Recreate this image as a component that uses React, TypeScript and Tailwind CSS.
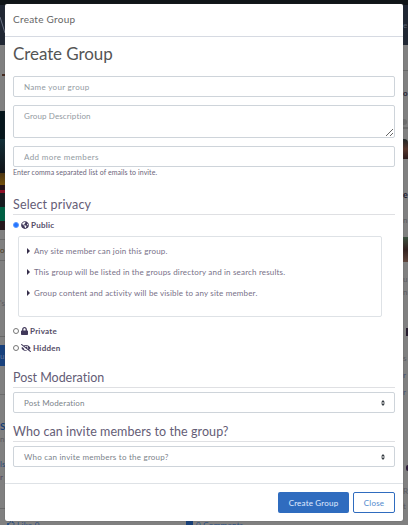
import { ReactNode } from "react";
import { FaEyeSlash, FaGlobeAmericas, FaLock, FaRegThumbsUp } from "react-icons/fa";

const fieldClass =
  "block w-full shrink-0 rounded-[2px] border border-[#ced4da] bg-white px-[10px] text-[8px] text-[#7b838a] placeholder-[#929a9f] outline-none";

const publicRules = [
  "Any site member can join this group.",
  "This group will be listed in the groups directory and in search results.",
  "Group content and activity will be visible to any site member.",
];

interface SectionProps {
  title: string;
  className?: string;
  children: ReactNode;
}

function Section({ title, className = "tracking-[0.05px]", children }: SectionProps) {
  return (
    <section className="flex shrink-0 flex-col gap-[4px]">
      <h2
        className={`h-[21px] border-b border-[#dfe0e3] pt-px text-[12.5px] leading-[20px] whitespace-nowrap text-[#645d76] ${className}`}
      >
        {title}
      </h2>
      {children}
    </section>
  );
}

interface PrivacyOptionProps {
  icon: ReactNode;
  label: string;
  checked?: boolean;
}

function PrivacyOption({ icon, label, checked }: PrivacyOptionProps) {
  return (
    <label className="flex h-[10px] items-center gap-[2px] text-[8px] leading-[10px] font-bold tracking-[0.25px] text-[#544d68]">
      <input
        type="radio"
        name="privacy"
        defaultChecked={checked}
        className="size-[6px] appearance-none rounded-full border border-[#767676] bg-white checked:border-[#5b9aff] checked:bg-[#2374ff]"
      />
      <span className="text-[#40385a]">{icon}</span>
      {label}
    </label>
  );
}

function SelectField({ label, className }: { label: string; className: string }) {
  return (
    <button
      type="button"
      className={`${fieldClass} flex! h-[21px] items-center justify-between text-left ${className}`}
    >
      {label}
      <svg width="4" height="6" viewBox="0 0 4 6" className="mr-[-1px] fill-[#343a40]">
        <path d="M2 0 0 2.4h4zm0 6L0 3.6h4z" />
      </svg>
    </button>
  );
}

// Page left showing around the dialog: a sliver on each side and one below
function Backdrop() {
  return (
    <div className="absolute inset-0 flex flex-col overflow-hidden bg-[#808080] text-[8px] leading-[10px] whitespace-nowrap text-[#5b5b60]">
      <div className="h-[5px] shrink-0 bg-[#101518]" />
      <div className="flex h-[40px] shrink-0 items-center justify-between bg-[#202733] text-[#596171]">
        <svg width="5" height="18" viewBox="0 0 5 18" className="fill-none stroke-[#687080]">
          <path d="M0 1l5 16" />
        </svg>
        <span className="w-[5px] pb-[1px]">e</span>
      </div>

      <div className="flex h-[475px] shrink-0 justify-between">
        <div className="flex w-[5px] flex-col overflow-hidden">
          <div className="flex h-[66px] flex-col items-end pt-[29px]">
            <div className="h-[2px] w-[3px] bg-[#44291f]" />
          </div>
          <div className="flex h-[119px] flex-col bg-[#071920]">
            <div className="h-[28px] bg-[#06161c]" />
            <div className="h-[34px] bg-linear-to-b from-[#123038] to-[#101318]" />
            <div className="h-[12px] bg-linear-to-b from-[#4c3511] to-[#74500a]" />
            <div className="h-[5px] bg-[#241117]" />
            <div className="h-[3px] bg-[#8d1027]" />
            <div className="h-[14px] bg-[#171b20]" />
            <div className="h-[14px] bg-[#006044]" />
            <div className="h-[9px] bg-[#24171c]" />
          </div>
          <div className="flex h-[31px] flex-col justify-end border-b border-[#6a6a6a] text-[#4b3d24]">
            <div className="flex h-[21px] items-center border-t border-[#6a6a6a]">o</div>
          </div>
          <div className="flex h-[76px] items-center border-b border-[#686868] pt-[8px]">'s</div>
          <div className="flex h-[29px] items-end">
            <div className="flex h-[21px] w-full items-center bg-[#18417d] text-[#66759b]">u</div>
          </div>
          <div className="h-[29px] border-b border-[#6c6c6c]" />
          <div className="flex h-[114px] flex-col border-b border-[#696969] pt-[26px]">
            <span className="h-[13px] text-[10px] font-bold text-[#173f77]">S</span>
            <span className="h-[25px]">n</span>
            <span className="h-[13px] text-[#294878]">ls</span>
            <span className="text-[#4d425e]">r</span>
          </div>
        </div>

        <div className="flex w-[5px] flex-col overflow-hidden">
          <div className="h-[26px] border-b border-[#686868]" />
          <div className="flex h-[48px] items-start pt-[17px] font-bold text-[#242032]">o</div>
          <div className="flex h-[20px] flex-col gap-[2px]">
            <div className="h-[6px] w-[4px] rounded-r-sm bg-[#6c6c6c]" />
            <div className="h-[2px] bg-[#6c6c6c]" />
          </div>
          <div className="h-[20px] rounded-tr-sm bg-linear-to-b from-[#1f2626] via-[#58382e] to-[#2d1c1d]" />
          <div className="flex h-[78px] flex-col gap-[15px] pt-[31px]">
            <span className="text-[9px] font-bold text-[#242032]">e</span>
            <span>n</span>
          </div>
          <div className="h-[25px] bg-linear-to-b from-[#3b5140] via-[#332320] to-[#60463d]" />
          <div className="flex h-[66px] flex-col gap-[3px] pt-[12px]">
            <span>u</span>
            <span>n</span>
          </div>
          <div className="h-[8px] w-[2px] self-end bg-[#241b2c]" />
          <div className="flex h-[129px] flex-col gap-[7px] pt-[17px]">
            <span>s</span>
            <span className="text-[#454e70]">r</span>
            <span className="text-[#454e70]">r</span>
          </div>
          <div className="flex flex-col gap-[5px]">
            <div className="mb-[10px] h-[6px] w-[2px] self-end rounded-l-sm bg-[#2b1b38]" />
            <span>R</span>
            <span>t</span>
          </div>
        </div>
      </div>

      <div className="flex h-[10px] shrink-0 items-start gap-[146px] pl-[7px] tracking-[0.3px] text-[#294f83]">
        <div className="flex w-[33px] items-start gap-[2px]">
          <FaRegThumbsUp size={8} />
          Like 0
        </div>
        <div className="flex items-start gap-[3px]">
          <div className="mt-px h-[7px] w-[7px] bg-[#173f77]" />
          0 Comments
        </div>
      </div>
    </div>
  );
}

export default function App() {
  return (
    <div className="relative h-[525px] w-[408px] overflow-hidden px-[5px] py-[4px] font-['Lato','Open_Sans',sans-serif]">
      <Backdrop />
      <div
        role="dialog"
        className="relative flex h-[517px] flex-col rounded-[2px] bg-white shadow-[0_0_1px_#444]"
      >
        <header className="flex h-[33px] shrink-0 items-center border-b border-[#d6dae2] px-[8px] pb-px text-[10px] tracking-[0.27px] text-[#666]">
          Create Group
        </header>

        <main className="flex h-[446px] shrink-0 flex-col gap-[8px] px-[8px] pt-[5px]">
          <h1 className="h-[26px] shrink-0 text-[17px] leading-[24px] tracking-[-0.08px] text-[#555]">
            Create Group
          </h1>
          <input
            placeholder="Name your group"
            className={`${fieldClass} h-[21px] tracking-[0.32px]`}
          />
          <textarea
            placeholder="Group Description"
            className={`${fieldClass} h-[33px] resize pt-[5px] leading-[11px] tracking-[0.12px]`}
          />
          <div className="mb-[10px] shrink-0">
            <input
              placeholder="Add more members"
              className={`${fieldClass} h-[21px] tracking-[0.37px]`}
            />
            <p className="h-[9px] text-[7px] leading-[10px] tracking-[0.07px] whitespace-nowrap text-[#6b657a]">
              Enter comma separated list of emails to invite.
            </p>
          </div>

          <Section title="Select privacy" className="tracking-[0.15px]">
            <div className="flex flex-col gap-[7px] pt-px pb-[6px]">
              <PrivacyOption checked icon={<FaGlobeAmericas size={8} />} label="Public" />
              <ul className="mr-[13px] mb-[2px] ml-[5px] -mt-px h-[81px] rounded-[2px] border border-[#dee2e6] pt-[3px] pl-[8px]">
                {publicRules.map((rule) => (
                  <li
                    key={rule}
                    className="flex h-[21px] items-center gap-[4px] text-[8px] tracking-[0.17px] whitespace-nowrap text-[#777087]"
                  >
                    <svg width="3" height="6" viewBox="0 0 3 6" className="fill-[#352d49]">
                      <path d="M0 0v6l3-3z" />
                    </svg>
                    {rule}
                  </li>
                ))}
              </ul>
              <PrivacyOption icon={<FaLock size={8} className="w-[7px]" />} label="Private" />
              <PrivacyOption icon={<FaEyeSlash size={10} />} label="Hidden" />
            </div>
          </Section>

          <Section title="Post Moderation" className="tracking-[-0.03px]">
            <SelectField label="Post Moderation" className="tracking-[0.13px]" />
          </Section>
          <Section title="Who can invite members to the group?" className="tracking-[0.07px]">
            <SelectField
              label="Who can invite members to the group?"
              className="tracking-[0.23px]"
            />
          </Section>
        </main>

        <footer className="flex h-[38px] shrink-0 justify-end gap-[4px] border-t border-[#dee2e6] px-[8px] pt-[8px] text-[8px] tracking-[0.2px]">
          <button className="h-[21px] w-[71px] rounded-[2px] bg-[#2f6cbf] pt-px text-[#e0edff]">
            Create Group
          </button>
          <button className="h-[21px] w-[42px] rounded-[2px] border border-[#2f6cbf] pt-px text-[#5089cd]">
            Close
          </button>
        </footer>
      </div>
    </div>
  );
}
